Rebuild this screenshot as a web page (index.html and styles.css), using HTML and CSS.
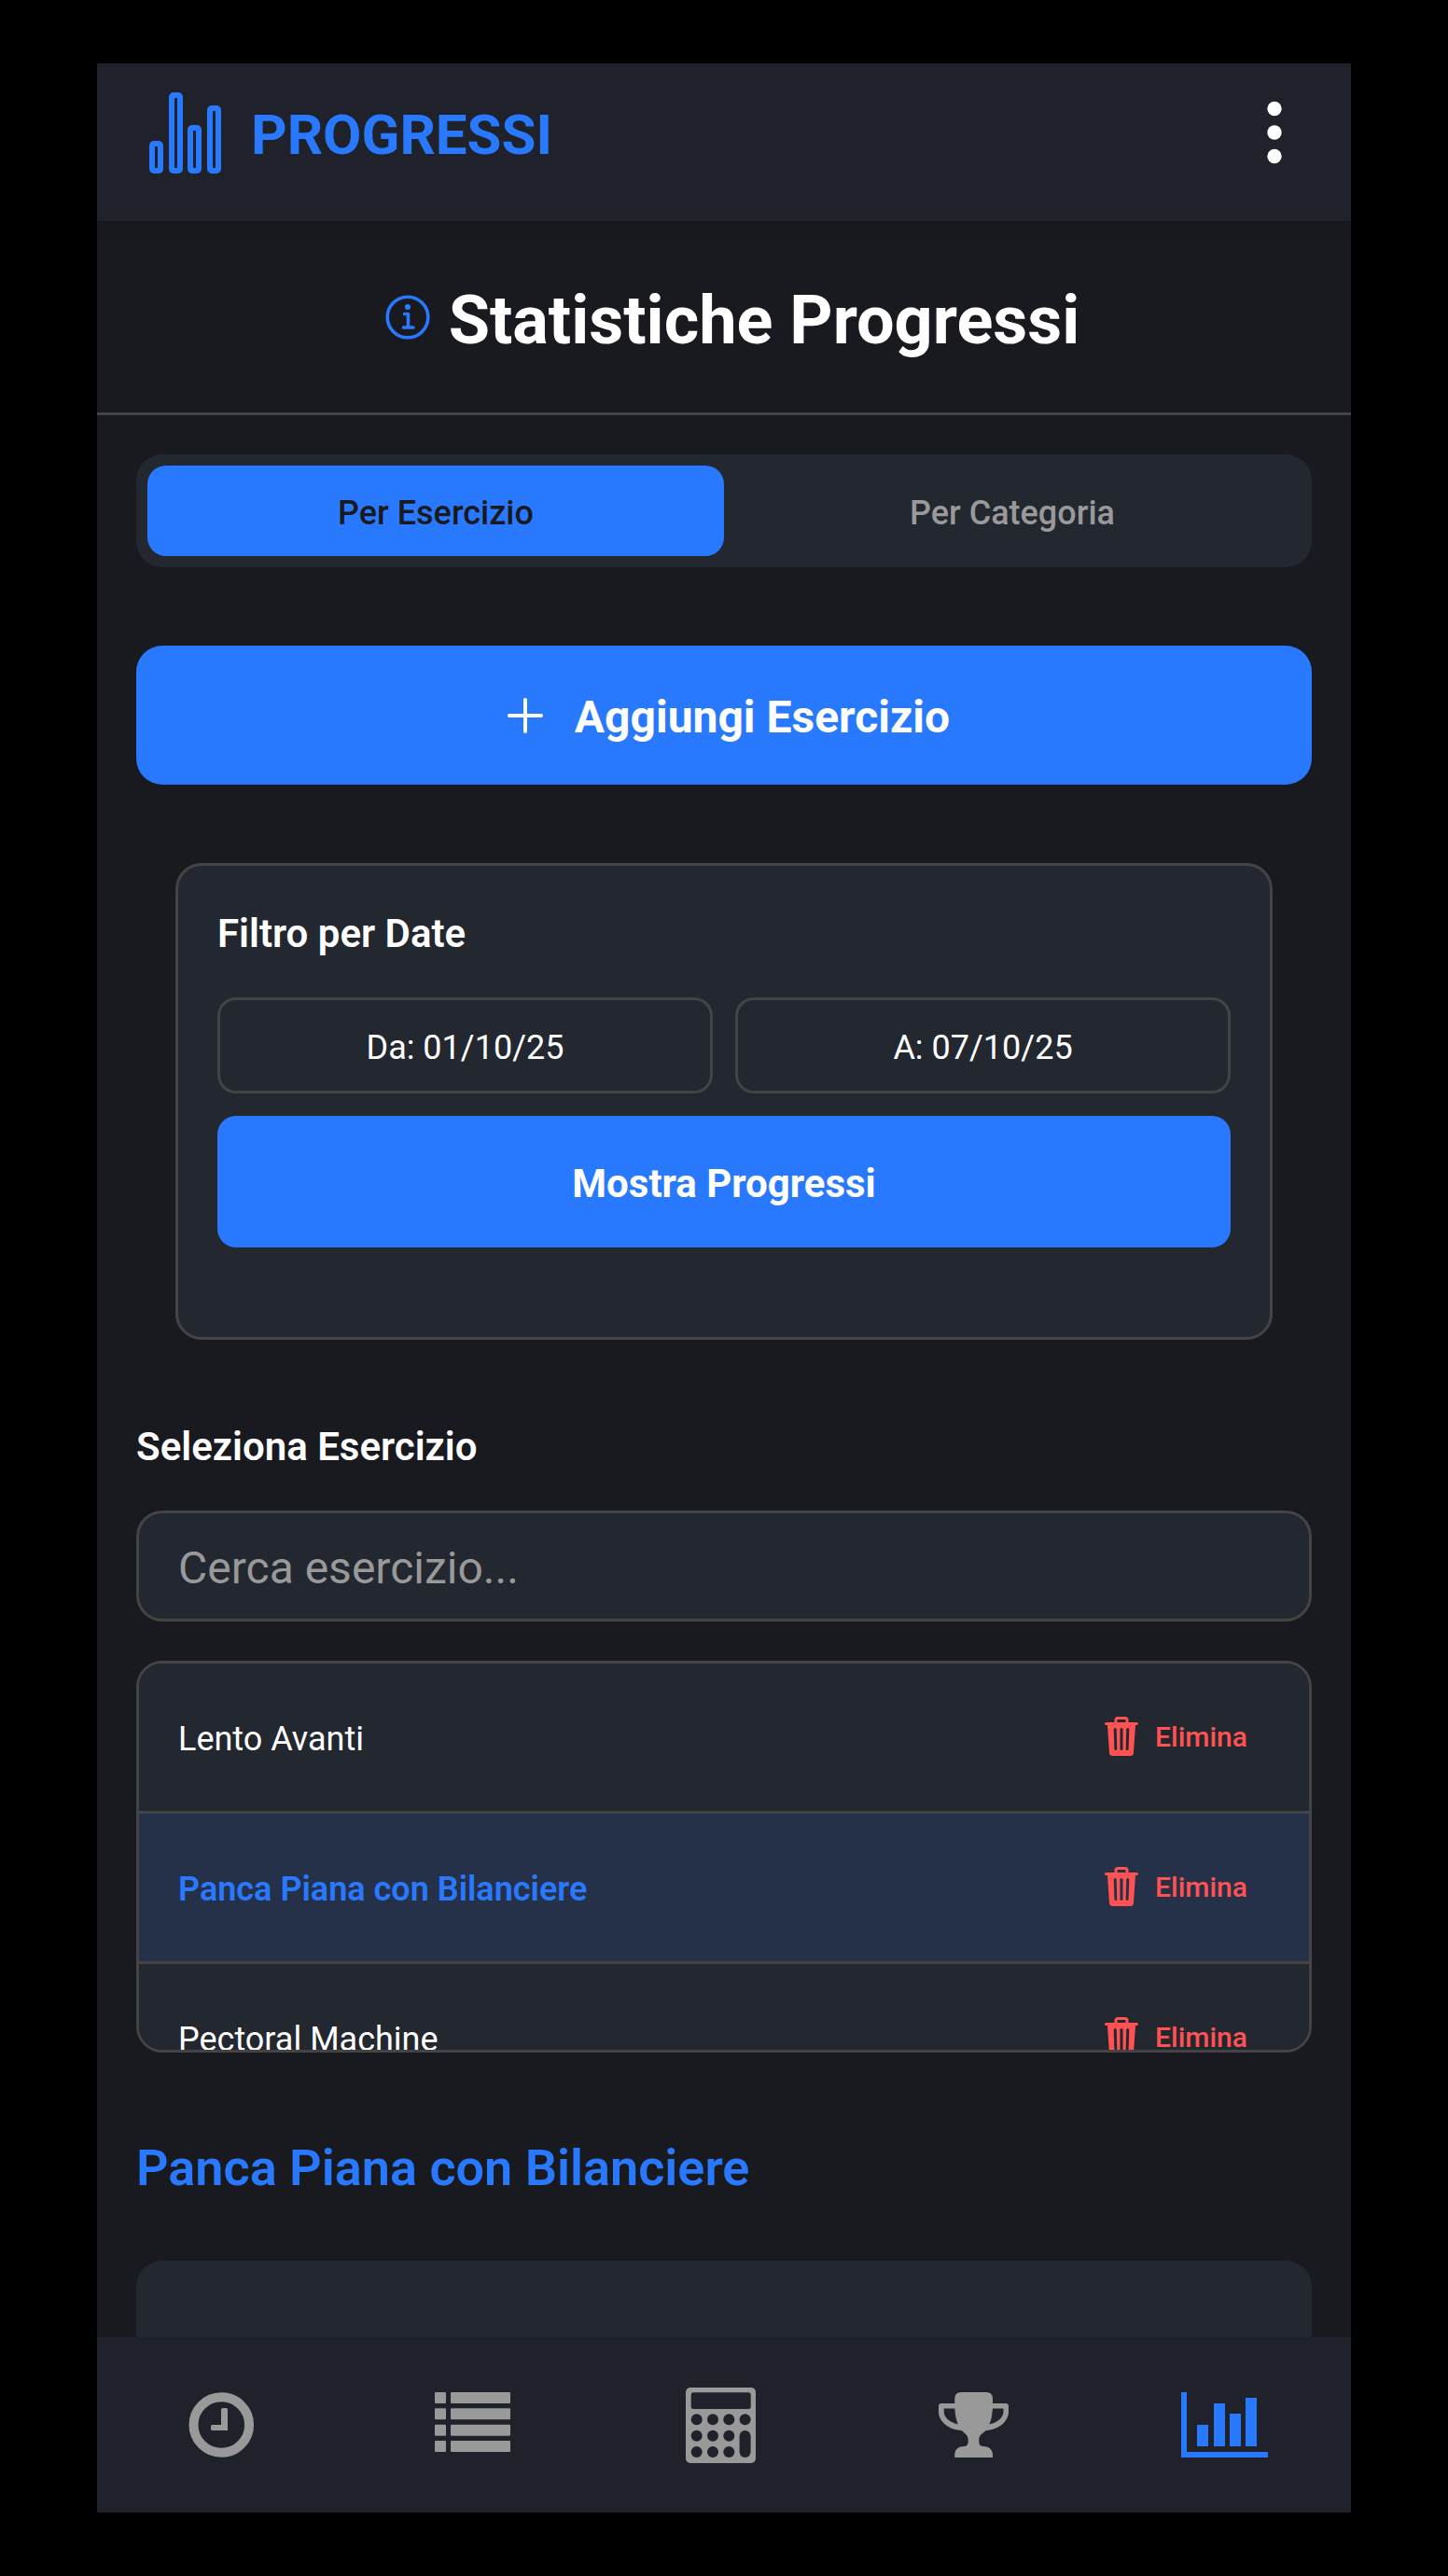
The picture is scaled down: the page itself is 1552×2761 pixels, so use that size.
FILE: index.html
```html
<!DOCTYPE html>
<html lang="it">
<head>
<meta charset="utf-8">
<meta name="viewport" content="width=device-width, initial-scale=1">
<title>Progressi</title>
<link rel="stylesheet" href="styles.css">
</head>
<body>
<svg class="sprite" aria-hidden="true">
  <symbol id="trash" viewBox="0 0 36 42">
    <path fill="none" stroke="currentColor" stroke-width="3" d="M12 7V3.500Q12 1.500 14 1.500H22Q24 1.500 24 3.500V7"/>
    <path fill="currentColor" fill-rule="evenodd" d="M1.500 6H34.500A1.500 1.500 0 0 1 34.500 9H33L31 38.500Q30.800 42 27.500 42H8.500Q5.200 42 5 38.500L3 9H1.500A1.500 1.500 0 0 1 1.500 6ZM11.200 12Q9.700 12 9.700 13.500L10.400 34.500Q10.500 36 11.900 36 13.400 36 13.300 34.500L12.700 13.500Q12.600 12 11.200 12ZM18 12Q16.500 12 16.500 13.500V34.500Q16.500 36 18 36T19.500 34.500V13.500Q19.500 12 18 12ZM24.800 12Q23.400 12 23.300 13.500L22.700 34.500Q22.600 36 24.100 36 25.500 36 25.600 34.500L26.300 13.500Q26.300 12 24.800 12Z"/>
  </symbol>
</svg>
<div class="app">
  <header class="topbar">
    <svg class="brand-icon" viewBox="0 0 78 88" aria-hidden="true">
      <g fill="none" stroke="currentColor" stroke-width="6">
        <rect x="3" y="56" width="9" height="29" rx="2"/>
        <rect x="24" y="4" width="9" height="81" rx="2"/>
        <rect x="44" y="39" width="9" height="46" rx="2"/>
        <rect x="65" y="18" width="9" height="67" rx="2"/>
      </g>
    </svg>
    <span class="brand">PROGRESSI</span>
    <button class="menu" type="button" aria-label="Menu">
      <svg viewBox="0 0 16 68" fill="currentColor"><circle cx="8" cy="8.500" r="7.700"/><circle cx="8" cy="34" r="7.700"/><circle cx="8" cy="59.500" r="7.700"/></svg>
    </button>
  </header>

  <div class="page-title">
    <svg class="info" viewBox="0 0 48 48" aria-hidden="true">
      <circle cx="24" cy="24" r="21.800" fill="none" stroke="currentColor" stroke-width="3.600"/>
      <circle cx="24" cy="13" r="3.100" fill="currentColor"/>
      <path d="M20.500 20.500H24.500V35M19.500 35H30" fill="none" stroke="currentColor" stroke-width="3.600" stroke-linecap="round" stroke-linejoin="round"/>
    </svg>
    <h1>Statistiche Progressi</h1>
  </div>

  <main>
    <div class="tabs" role="tablist">
      <button class="tab active" type="button" role="tab" aria-selected="true">Per Esercizio</button>
      <button class="tab" type="button" role="tab" aria-selected="false">Per Categoria</button>
    </div>

    <button class="add" type="button">
      <svg viewBox="0 0 38 38" aria-hidden="true"><path d="M19 2V36M2 19H36" stroke="currentColor" stroke-width="4" stroke-linecap="round"/></svg>
      <span>Aggiungi Esercizio</span>
    </button>

    <section class="filter">
      <h2>Filtro per Date</h2>
      <div class="dates">
        <button class="date" type="button">Da: 01/10/25</button>
        <button class="date" type="button">A: 07/10/25</button>
      </div>
      <button class="show" type="button">Mostra Progressi</button>
    </section>

    <section class="picker">
      <h2><label for="search">Seleziona Esercizio</label></h2>
      <input id="search" type="text" placeholder="Cerca esercizio...">
      <ul class="exercises">
        <li><span>Lento Avanti</span><button class="delete" type="button"><svg><use href="#trash"/></svg>Elimina</button></li>
        <li class="selected"><span>Panca Piana con Bilanciere</span><button class="delete" type="button"><svg><use href="#trash"/></svg>Elimina</button></li>
        <li><span>Pectoral Machine</span><button class="delete" type="button"><svg><use href="#trash"/></svg>Elimina</button></li>
      </ul>
    </section>

    <section class="result">
      <h2>Panca Piana con Bilanciere</h2>
      <div class="chart"></div>
    </section>
  </main>

  <nav class="bottom">
    <a href="#timer" aria-label="Timer">
      <svg viewBox="0 0 96 96" fill="currentColor"><circle cx="47.300" cy="48" r="29.800" fill="none" stroke="currentColor" stroke-width="10"/><path d="M48.500 30H52.500Q54 30 54 31.500V54H37.500Q36 54 36 52.500V49.500Q36 48 37.500 48H47V31.500Q47 30 48.500 30Z"/></svg>
    </a>
    <a href="#schede" aria-label="Schede">
      <svg viewBox="0 0 96 96" fill="currentColor">
        <rect x="7" y="13" width="12" height="12" rx="1"/><rect x="24" y="13" width="64" height="12" rx="1"/>
        <rect x="7" y="30.300" width="12" height="12" rx="1"/><rect x="24" y="30.300" width="64" height="12" rx="1"/>
        <rect x="7" y="47.700" width="12" height="12" rx="1"/><rect x="24" y="47.700" width="64" height="12" rx="1"/>
        <rect x="7" y="65" width="12" height="12" rx="1"/><rect x="24" y="65" width="64" height="12" rx="1"/>
      </svg>
    </a>
    <a href="#calcolatrice" aria-label="Calcolatrice">
      <svg viewBox="0 0 96 96">
        <rect x="7" y="8" width="75" height="81" rx="5" fill="currentColor"/>
        <g class="hole">
          <rect x="12.700" y="13.300" width="64" height="17.700" rx="2.500"/>
          <circle cx="18.700" cy="42.300" r="6"/><circle cx="36" cy="42.300" r="6"/><circle cx="53.300" cy="42.300" r="6"/><circle cx="70.600" cy="42.300" r="6"/>
          <circle cx="18.700" cy="59.700" r="6"/><circle cx="36" cy="59.700" r="6"/><circle cx="53.300" cy="59.700" r="6"/>
          <circle cx="18.700" cy="77" r="6"/><circle cx="36" cy="77" r="6"/><circle cx="53.300" cy="77" r="6"/>
          <rect x="64.600" y="54" width="12" height="29" rx="6"/>
        </g>
      </svg>
    </a>
    <a href="#record" aria-label="Record">
      <svg viewBox="0 0 96 96" fill="currentColor"><path fill-rule="evenodd" d="M33 13H60Q67 13 67 20V25H81Q84 25 84 28V34C84 44 74 53 60 54C56 57 52.300 59 52.300 64V66Q52.300 71 57 71C62 71 67 74 67 80V83H26.300V80C26.300 74 31 71 36 71Q40.700 71 40.700 66V64C40.700 59 37 57 33.500 54C19 53 9 44 9 34V28Q9 25 12 25H26.300V20Q26.300 13 33 13ZM26.300 30.500H14.700V34C14.700 40 21 45.500 29.700 47.500Q26.700 40 26.300 30.500ZM67 30.500Q66.500 40 63.500 47.500C72 45.500 78.500 40 78.500 34V30.500Z"/></svg>
    </a>
    <a class="current" href="#progressi" aria-label="Progressi" aria-current="page">
      <svg viewBox="0 0 96 96" fill="currentColor"><path d="M0 13H6V77H93V83H0ZM17 48H29V71H17ZM35 25H47V71H35ZM52 36H64V71H52ZM69 19H81V71H69Z"/></svg>
    </a>
  </nav>
</div>
</body>
</html>
```

FILE: styles.css
```css
:root {
  --bg: #191a1f;
  --bar: #1f222a;
  --card: #23272f;
  --line: #444444;
  --blue: #2979ff;
  --muted: #999999;
  --red: #ff5252;
}

* { box-sizing: border-box; }

body {
  margin: 0;
  padding: 68px 104px;
  background: #000;
  color: #fff;
  font-family: Roboto, "Liberation Sans", sans-serif;
  font-size: 36px;
}

h1, h2, ul { margin: 0; padding: 0; }
button, input { font: inherit; color: inherit; border: 0; background: none; padding: 0; }
button { cursor: pointer; }
svg { display: block; flex: none; }
.sprite { position: absolute; width: 0; height: 0; }

.app { background: var(--bg); }

.topbar {
  display: flex;
  align-items: center;
  height: 169px;
  padding: 0 56px 22px;
  background: var(--bar);
  box-shadow: 0 4px 12px rgba(0, 0, 0, .15);
}
.brand-icon { width: 78px; height: 88px; color: var(--blue); }
.brand { margin-left: 31px; padding-top: 5px; color: var(--blue); font-size: 60px; font-weight: 700; }
.menu { margin-left: auto; padding: 0 18px; }
.menu svg { width: 16px; height: 68px; }

.page-title {
  display: flex;
  align-items: center;
  justify-content: center;
  gap: 20px;
  height: 208px;
  padding-left: 18px;
  border-bottom: 3px solid var(--line);
}
.info { width: 48px; height: 48px; color: var(--blue); }
h1 { padding-top: 8px; font-size: 72px; font-weight: 700; }

main { padding: 42px 42px 0; }

.tabs { display: flex; padding: 12px; border-radius: 28px; background: var(--card); }
.tab { flex: 1; height: 97px; padding-top: 4px; border-radius: 20px; color: var(--muted); font-weight: 500; }
.tab.active { background: var(--blue); color: var(--bg); }

.add {
  display: flex;
  align-items: center;
  justify-content: center;
  gap: 34px;
  width: 100%;
  height: 149px;
  margin-top: 84px;
  padding-left: 10px;
  border-radius: 28px;
  background: var(--blue);
  font-size: 48px;
  font-weight: 700;
}
.add svg { width: 38px; height: 38px; }
.add span { padding-top: 4px; }

h2 { font-size: 42px; line-height: 50px; font-weight: 600; }

.filter {
  margin: 84px 42px 0;
  padding: 48px 42px 96px;
  border: 3px solid var(--line);
  border-radius: 28px;
  background: var(--card);
}
.dates { display: flex; gap: 24px; margin: 43px 0 24px; }
.date { flex: 1; height: 103px; padding-top: 4px; border: 3px solid var(--line); border-radius: 20px; }
.show {
  display: block;
  width: 100%;
  height: 141px;
  padding-top: 4px;
  border-radius: 20px;
  background: var(--blue);
  font-size: 42px;
  font-weight: 700;
}

.picker { margin-top: 90px; }
.picker input {
  display: block;
  width: 100%;
  height: 119px;
  margin: 43px 0 42px;
  padding: 4px 42px 0;
  border: 3px solid var(--line);
  border-radius: 28px;
  background: var(--card);
  font-size: 48px;
}
.picker input::placeholder { color: var(--muted); opacity: 1; }

.exercises {
  height: 420px;
  overflow-y: auto;
  scrollbar-width: none;
  list-style: none;
  border: 3px solid var(--line);
  border-radius: 28px;
  background: var(--card);
}
.exercises li {
  display: flex;
  align-items: center;
  justify-content: space-between;
  height: 161px;
  padding: 0 66px 0 42px;
  border-bottom: 3px solid var(--line);
}
.exercises span { padding-top: 4px; }
.exercises .selected { background: #253149; }
.selected span { color: var(--blue); font-weight: 600; }
.delete { display: flex; align-items: center; gap: 18px; padding-bottom: 2px; color: var(--red); font-size: 30px; font-weight: 500; }
.delete svg { width: 36px; height: 42px; }

.result { margin-top: 92px; }
.result h2 { color: var(--blue); font-size: 54px; line-height: 64px; }
.chart { height: 82px; margin-top: 67px; border-radius: 28px 28px 0 0; background: var(--card); }

.bottom { display: flex; align-items: center; height: 188px; background: var(--bar); }
.bottom a { flex: 1; display: flex; justify-content: center; color: var(--muted); }
.bottom .current { color: var(--blue); }
.bottom svg { width: 96px; height: 96px; }
.hole { fill: var(--bar); }
```
